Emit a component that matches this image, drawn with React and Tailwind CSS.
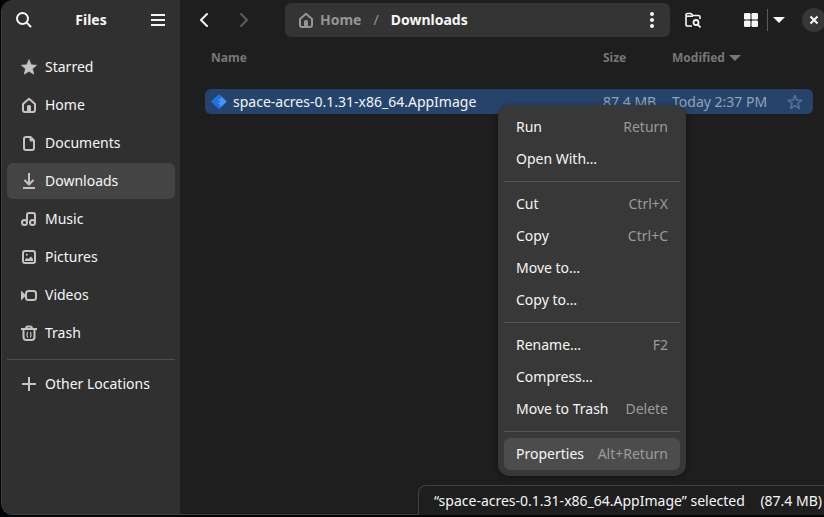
import React from "react";

function Icon({ children, className = "", size = 16 }) {
  return (
    <svg
      viewBox="0 0 16 16"
      width={size}
      height={size}
      fill="none"
      stroke="currentColor"
      strokeWidth="2"
      aria-hidden="true"
      className={`shrink-0 ${className}`}
    >
      {children}
    </svg>
  );
}

const glyphs = {
  star: (
    <path
      fill="currentColor"
      strokeWidth="0.6"
      strokeLinejoin="round"
      d="M8 .6 10.2 5.7l5.4.5-4.1 3.6 1.3 5.4L8 12.3l-4.8 2.9 1.3-5.4L.4 6.2l5.4-.5z"
    />
  ),
  home: (
    <>
      <path strokeLinejoin="round" d="M2 7 8 1.800l6 5.200V13a2 2 0 0 1-2 2H4a2 2 0 0 1-2-2z" />
      <path fill="currentColor" stroke="none" d="M6 15V9.500a1.500 1.500 0 0 1 1.500-1.500h1A1.500 1.500 0 0 1 10 9.500V15z" />
    </>
  ),
  document: (
    <>
      <path strokeLinejoin="round" d="M5 2h4.500L13 5.500V13a2 2 0 0 1-2 2H5a2 2 0 0 1-2-2V4a2 2 0 0 1 2-2z" />
      <path fill="currentColor" stroke="none" d="M8.500 2v3a1.500 1.500 0 0 0 1.500 1.500h3z" />
    </>
  ),
  download: (
    <>
      <path d="M8 0v11" />
      <path strokeLinecap="round" strokeLinejoin="round" d="M4 7.500 8 11.500l4-4" />
      <path d="M2 15h12" />
    </>
  ),
  music: (
    <>
      <circle cx="3.500" cy="11.500" r="2.500" />
      <circle cx="11.500" cy="11.500" r="2.500" />
      <path strokeLinejoin="round" d="M6 11.500V4a2 2 0 0 1 2-2h4a2 2 0 0 1 2 2v7.500" />
    </>
  ),
  picture: (
    <>
      <rect x="2" y="2" width="12" height="12" rx="2" />
      <circle cx="5.800" cy="5.800" r="1" fill="currentColor" stroke="none" />
      <path fill="currentColor" stroke="none" d="M4 12v-1.500l2-1.500 1.500 1L10 7.500l2 2.500v2z" />
    </>
  ),
  video: (
    <>
      <rect x="5" y="4" width="10" height="9" rx="2.500" />
      <path fill="currentColor" stroke="none" d="M0 3.500 5 8.500 0 13.500z" />
    </>
  ),
  trash: (
    <>
      <path d="M0 4h16" />
      <path d="M5 3.500C5 2 5.500 1.500 7 1.500h2c1.500 0 2 .5 2 2" />
      <path d="M2.500 4v8a3 3 0 0 0 3 3h5a3 3 0 0 0 3-3V4" />
      <path strokeWidth="1.200" d="M7 7.200c-1.300.2-1.300 5 0 5.200M9 7.200c1.300.2 1.300 5 0 5.200" />
    </>
  ),
  plus: <path d="M8 1v14M1 8h14" />,
};

const places = [
  ["Starred", "star"],
  ["Home", "home"],
  ["Documents", "document"],
  ["Downloads", "download"],
  ["Music", "music"],
  ["Pictures", "picture"],
  ["Videos", "video"],
  ["Trash", "trash"],
];

function Place({ label, icon, active }) {
  return (
    <li>
      <button
        type="button"
        aria-current={active ? "page" : undefined}
        className={`flex h-9 w-full items-center gap-2 rounded-md px-3.5 text-left ${active ? "bg-[#444444]" : ""}`}
      >
        <Icon className="text-[#c4c4c4]">{glyphs[icon]}</Icon>
        {label}
      </button>
    </li>
  );
}

function Sidebar() {
  return (
    <aside className="w-[178px] shrink-0 bg-[#303030]">
      <header className="flex h-10 items-center justify-between px-3.5">
        <button type="button" aria-label="Search">
          <Icon>
            <circle cx="6.500" cy="6.500" r="5.500" />
            <path strokeLinecap="round" d="m10.500 10.500 4 4" />
          </Icon>
        </button>
        <h1 className="font-bold">Files</h1>
        <button type="button" aria-label="Main menu">
          <Icon>
            <path d="M1 3h14M1 8h14M1 13h14" />
          </Icon>
        </button>
      </header>
      <nav aria-label="Places" className="px-[5px] pt-[9px]">
        <ul className="flex flex-col gap-0.5">
          {places.map(([label, icon]) => (
            <Place key={label} label={label} icon={icon} active={label === "Downloads"} />
          ))}
        </ul>
        <hr className="mt-2 mb-1.5 border-[#505050]" />
        <ul>
          <Place label="Other Locations" icon="plus" />
        </ul>
      </nav>
    </aside>
  );
}

function Toolbar() {
  return (
    <header className="flex h-10 shrink-0 items-center pl-4">
      <button type="button" aria-label="Back">
        <Icon>
          <path strokeLinecap="round" strokeLinejoin="round" d="M11 2 5 8l6 6" />
        </Icon>
      </button>
      <button type="button" aria-label="Forward" disabled className="ml-6 text-[#5c5c5c]">
        <Icon>
          <path strokeLinecap="round" strokeLinejoin="round" d="m5 2 6 6-6 6" />
        </Icon>
      </button>
      <div className="ml-[33px] flex h-[34px] grow items-center rounded-md bg-[#343434] pr-2.5 pl-[13px] font-bold">
        <button type="button" className="flex items-center gap-1.5 text-[#959595]">
          <Icon>{glyphs.home}</Icon>
          Home
        </button>
        <span className="mx-3 font-normal text-[#959595]">/</span>
        <button type="button">Downloads</button>
        <button type="button" aria-label="Folder menu" className="ml-auto">
          <Icon>
            <g fill="currentColor" stroke="none">
              <circle cx="8" cy="2" r="2" />
              <circle cx="8" cy="8" r="2" />
              <circle cx="8" cy="14" r="2" />
            </g>
          </Icon>
        </button>
      </div>
      <button type="button" aria-label="Search in folder" className="ml-[15px]">
        <Icon>
          <path strokeWidth="1.600" strokeLinejoin="round" d="M7 14H2.500A1.500 1.500 0 0 1 1 12.500V3a1.500 1.500 0 0 1 1.500-1.500H6L8 3.500h5.500A1.500 1.500 0 0 1 15 5v2" />
          <path strokeWidth="1.600" d="M1 4.200h7" />
          <circle cx="11" cy="10.500" r="2.500" strokeWidth="1.800" />
          <path strokeLinecap="round" strokeWidth="1.800" d="m13 12.800 2 2" />
        </Icon>
      </button>
      <button type="button" aria-label="Grid view" className="ml-[42px]">
        <Icon>
          <g fill="currentColor" stroke="none">
            <rect x="1" y="1" width="6.500" height="6.500" rx="1.200" />
            <rect x="8.500" y="1" width="6.500" height="6.500" rx="1.200" />
            <rect x="1" y="8.500" width="6.500" height="6.500" rx="1.200" />
            <rect x="8.500" y="8.500" width="6.500" height="6.500" rx="1.200" />
          </g>
        </Icon>
      </button>
      <span className="ml-2 h-[22px] w-px bg-[#5a5a5a]" />
      <button type="button" aria-label="View options" className="ml-[3px]">
        <Icon>
          <path fill="currentColor" stroke="none" d="M2 5h12l-6 6z" />
        </Icon>
      </button>
      <button
        type="button"
        aria-label="Close"
        className="-mr-0.5 ml-[15px] grid size-6 shrink-0 place-items-center rounded-full bg-[#373737]"
      >
        <Icon>
          <path d="m4.500 4.500 7 7m0-7-7 7" />
        </Icon>
      </button>
    </header>
  );
}

function FileList() {
  return (
    <table className="mr-[11px] ml-[25px] table-fixed border-separate border-spacing-0 text-left">
      <colgroup>
        <col />
        <col className="w-[69px]" />
        <col className="w-[109px]" />
        <col className="w-8" />
      </colgroup>
      <thead className="text-xs text-[#777777]">
        <tr className="h-[49px] align-top">
          <th className="pt-2.5 pl-1.5 font-bold">Name</th>
          <th className="pt-2.5 font-bold">Size</th>
          <th className="pt-2.5 font-bold" colSpan={2} aria-sort="descending">
            <button type="button" className="flex items-center gap-0.5">
              Modified
              <Icon>
                <path fill="currentColor" stroke="none" d="M2 5h12l-6 6z" />
              </Icon>
            </button>
          </th>
        </tr>
      </thead>
      <tbody>
        <tr className="h-[25px] text-[#93a2b5]">
          <td className="rounded-l-md bg-[#26446b] p-0 pl-1.5 text-[#f2f5f8]">
            <span className="flex items-center gap-1.5">
              <svg viewBox="0 0 16 16" width="16" height="16" aria-hidden="true">
                <path fill="#174fa8" stroke="#174fa8" strokeLinejoin="round" d="m8 1.500 7.500 7-7.500 7-7.500-7z" />
                <path fill="#1f74e0" stroke="#1f74e0" strokeLinejoin="round" d="m8 .5 7.500 7-7.500 7-7.500-7z" />
                <path fill="#4a97f2" d="M10 2.500 15.500 7.500 9 13.500V10H7.500V8.500H9V6.500H7.500V5H10z" />
              </svg>
              space-acres-0.1.31-x86_64.AppImage
            </span>
          </td>
          <td className="bg-[#26446b] p-0 whitespace-nowrap">87.4 MB</td>
          <td className="bg-[#26446b] p-0 whitespace-nowrap">Today 2:37 PM</td>
          <td className="rounded-r-md bg-[#26446b] p-0">
            <button type="button" aria-label="Star file" className="ml-1.5 block text-[#55708f]">
              <Icon>
                <path strokeWidth="1.700" strokeLinejoin="round" d="M8 1.500 9.800 6l4.900.4-3.700 3 1.300 4.900L8 11.600l-4.300 2.700L5 9.400l-3.700-3L6.200 6z" />
              </Icon>
            </button>
          </td>
        </tr>
      </tbody>
    </table>
  );
}

const menu = [
  [["Run", "Return"], ["Open With…"]],
  [["Cut", "Ctrl+X"], ["Copy", "Ctrl+C"], ["Move to…"], ["Copy to…"]],
  [["Rename…", "F2"], ["Compress…"], ["Move to Trash", "Delete"]],
  [["Properties", "Alt+Return"]],
];

function ContextMenu() {
  return (
    <div
      role="menu"
      className="absolute top-[105px] left-[498px] w-[188px] rounded-xl bg-[#383838] p-1.5 shadow-[0_1px_5px_1px_rgba(0,0,0,0.3)]"
    >
      {menu.map((group, i) => (
        <div key={i} role="group">
          {i > 0 && <hr className="my-1.5 border-[#565656]" />}
          {group.map(([label, shortcut]) => (
            <button
              key={label}
              type="button"
              role="menuitem"
              className={`flex h-8 w-full items-center justify-between rounded-md px-3 whitespace-nowrap ${label === "Properties" ? "bg-[#4c4c4c]" : ""}`}
            >
              <span>{label}</span>
              <span className="text-[#9b9b9b]">{shortcut}</span>
            </button>
          ))}
        </div>
      ))}
    </div>
  );
}

export default function App() {
  return (
    <div className="relative flex h-screen flex-col overflow-hidden bg-[#030406] pb-0.5 pl-px font-['Noto_Sans',sans-serif] text-sm text-[#f6f6f6]">
      <div className="flex min-h-0 grow overflow-hidden rounded-l-xl border-b border-l border-[#404040] bg-[#1e1e1e]">
        <Sidebar />
        <main className="flex min-w-0 grow flex-col">
          <Toolbar />
          <FileList />
        </main>
      </div>
      <div
        role="status"
        className="absolute right-0 bottom-0.5 flex h-[30px] min-w-[406px] items-center justify-between rounded-tl-lg border-t border-l border-[#414141] bg-[#1e1e1e] pr-0.5 pl-[15px] whitespace-nowrap"
      >
        <span>“space-acres-0.1.31-x86_64.AppImage” selected</span>
        <span>(87.4 MB)</span>
      </div>
      <ContextMenu />
    </div>
  );
}
